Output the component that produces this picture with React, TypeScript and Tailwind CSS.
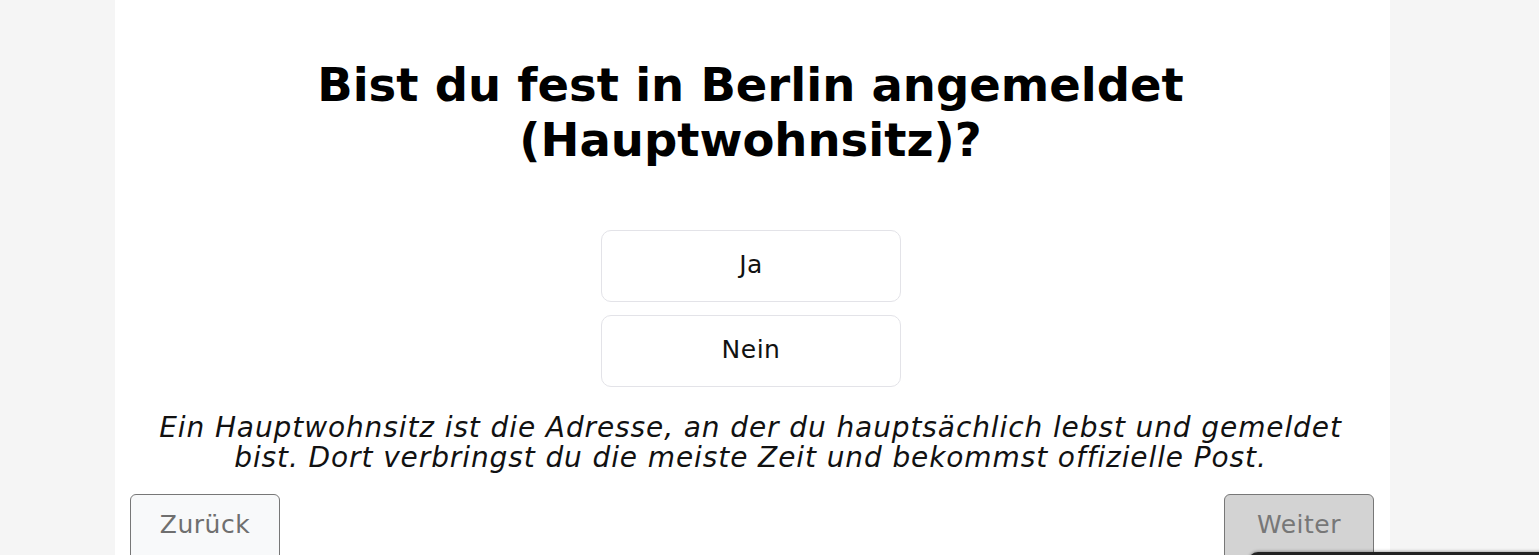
import React from "react";

const font = { fontFamily: "'DejaVu Sans', 'Open Sans', sans-serif" };

export default function App() {
  return (
    <div className="min-h-screen bg-[#f5f5f5] overflow-hidden" style={font}>
      <div className="ml-[115px] w-[1275px] min-h-[555px] bg-white px-[15px] pt-[58px]">
        <h1 className="pr-[4px] text-center text-[46.5px] font-bold leading-[55px] text-black">
          Bist du fest in Berlin angemeldet
          <br />
          (Hauptwohnsitz)?
        </h1>

        <div className="mt-[62px] flex flex-col items-center gap-[13px] pr-[3px]">
          {["Ja", "Nein"].map((o) => (
            <button
              key={o}
              className="flex h-[72px] w-[300px] items-center justify-center rounded-[10px] border border-[#e3e3e8] bg-white pb-[2px] text-[25px] tracking-[0.5px] text-[#111]"
            >
              {o}
            </button>
          ))}
        </div>

        <p className="mt-[26px] pr-[4px] text-center text-[28px] italic leading-[30px] tracking-[0.9px] text-[#111]">
          Ein Hauptwohnsitz ist die Adresse, an der du hauptsächlich lebst und gemeldet
          <br />
          bist. Dort verbringst du die meiste Zeit und bekommst offizielle Post.
        </p>

        <div className="mt-[21px] flex justify-between">
          <button className="h-[72px] w-[150px] rounded-[6px] border border-[#777] bg-[#f8f9fa] pb-[10px] text-[25px] tracking-[0.5px] text-[#6f6f6f]">
            Zurück
          </button>
          <button className="mr-px h-[72px] w-[150px] rounded-[6px] border border-[#777] bg-[#d3d3d3] pb-[10px] text-[25px] tracking-[0.5px] text-[#777]">
            Weiter
          </button>
        </div>
      </div>

      <div className="fixed bottom-[-40px] left-[1248px] h-[43px] w-[300px] rounded-tl-[10px] bg-[#222] shadow-[0_-1px_3px_rgba(0,0,0,0.3)]" />
    </div>
  );
}
